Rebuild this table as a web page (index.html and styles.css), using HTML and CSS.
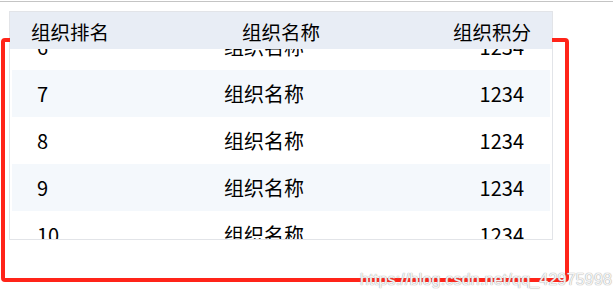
FILE: index.html
```html
<!DOCTYPE html>
<html>
<head>
<meta charset="utf-8">
<link rel="stylesheet" href="styles.css">
</head>
<body>
<div class="topline"></div>
<div class="table">
  <div class="thead">
    <div class="c1">组织排名</div>
    <div class="c2">组织名称</div>
    <div class="c3">组织积分</div>
  </div>
  <div class="tbody">
    <div class="rows">
      <div class="row"><div class="c1">6</div><div class="c2">组织名称</div><div class="c3">1234</div></div>
      <div class="row stripe"><div class="c1">7</div><div class="c2">组织名称</div><div class="c3">1234</div></div>
      <div class="row"><div class="c1">8</div><div class="c2">组织名称</div><div class="c3">1234</div></div>
      <div class="row stripe"><div class="c1">9</div><div class="c2">组织名称</div><div class="c3">1234</div></div>
      <div class="row"><div class="c1">10</div><div class="c2">组织名称</div><div class="c3">1234</div></div>
    </div>
  </div>
</div>
<div class="annot"></div>
<div class="watermark">https://blog.csdn.net/qq_42975998</div>
</body>
</html>
```
FILE: styles.css
```css
html, body {
  margin: 0;
  padding: 0;
  background: #fff;
  width: 613px;
  height: 298px;
  overflow: hidden;
  position: relative;
  font-family: "Noto Sans CJK SC", "Noto Sans", sans-serif;
  color: #000;
}
.topline {
  height: 1px;
  margin-top: 1px;
  background: #c4c4c4;
}
.table {
  margin: 9px 0 0 9px;
  width: 542px;
  height: 227px;
  border: 1px solid #e2e4e8;
  overflow: hidden;
  display: flex;
  flex-direction: column;
}
.thead {
  height: 37px;
  flex: none;
  background: #e8edf5;
  display: grid;
  grid-template-columns: 1fr 1fr 1fr;
  align-items: center;
  font-size: 19.5px;
  line-height: 1;
  position: relative;
  z-index: 1;
  padding-top: 2px;
  box-sizing: border-box;
}
.thead .c1 { padding-left: 21px; }
.thead .c2 { text-align: center; }
.thead .c3 { text-align: right; padding-right: 21px; }
.tbody {
  flex: 1;
  overflow: hidden;
  padding: 0 2px;
}
.rows {
  margin-top: -26px;
}
.row {
  height: 47px;
  display: grid;
  grid-template-columns: 160px 1fr 194px;
  align-items: center;
  font-size: 20px;
  line-height: 1;
}
.row.stripe { background: #f4f8fc; }
.row .c1 { padding-left: 25px; }
.row .c2 { text-align: center; }
.row .c3 { text-align: right; padding-right: 26px; }
.annot {
  position: absolute;
  left: 1px;
  top: 38px;
  width: 560px;
  height: 236px;
  border: 4px solid #ff2419;
  border-radius: 4px;
}
.watermark {
  position: absolute;
  left: 360px;
  top: 271px;
  font-family: "Liberation Sans", Arial, sans-serif;
  font-size: 16px;
  color: rgba(255,255,255,0.9);
  text-shadow: 0 0 1px #aaa, 0 0 1px #aaa;
  letter-spacing: 0.2px;
}
```
